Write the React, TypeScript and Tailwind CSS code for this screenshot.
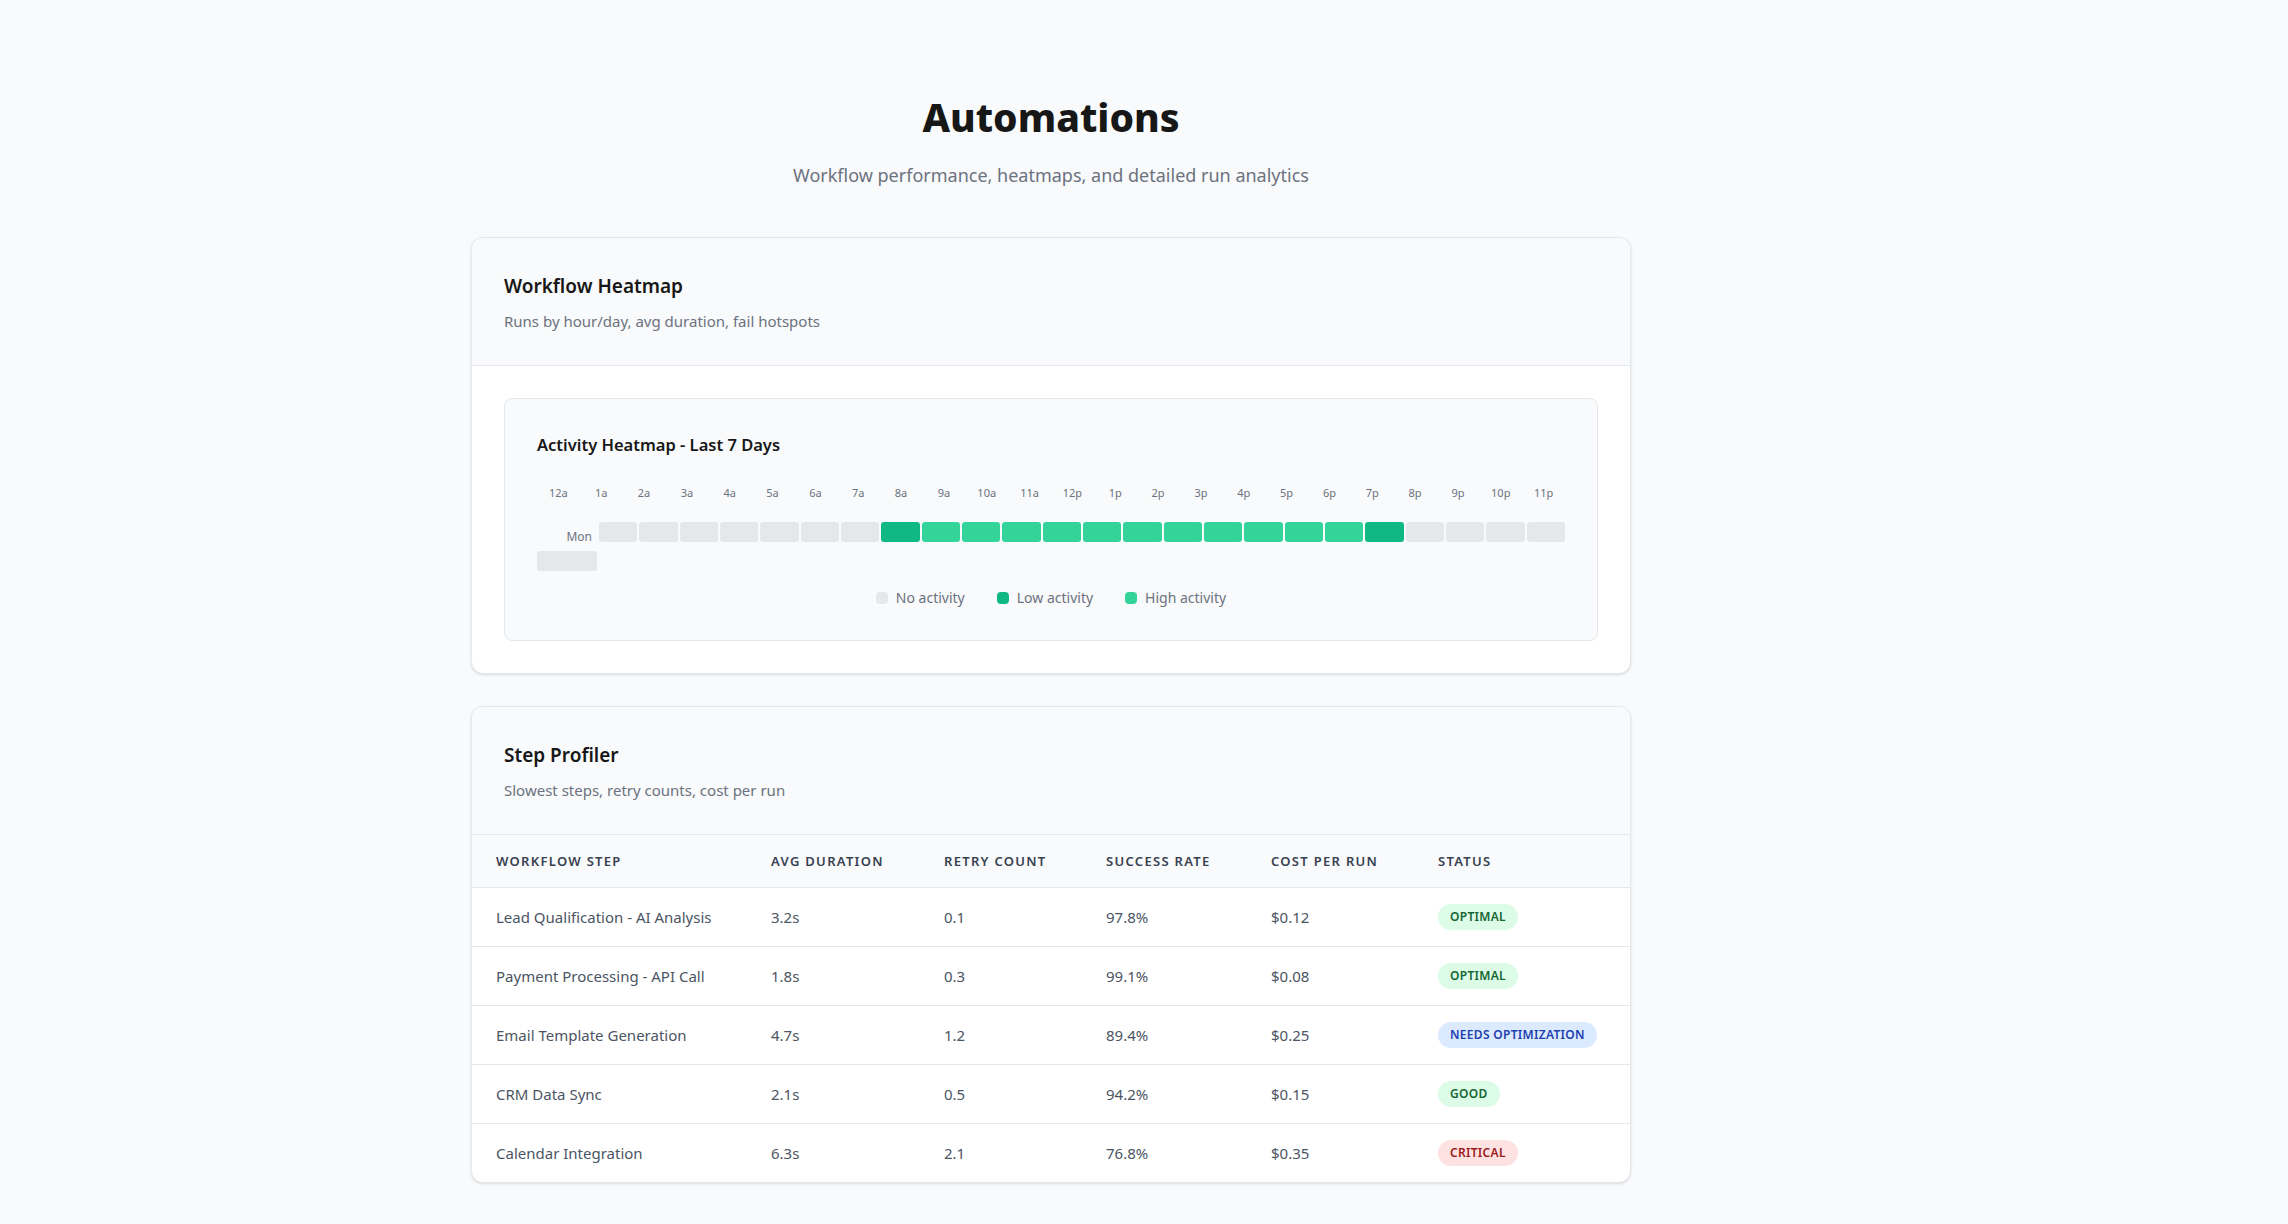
import React from "react";

const hours = [
  "12a", "1a", "2a", "3a", "4a", "5a", "6a", "7a", "8a", "9a", "10a", "11a",
  "12p", "1p", "2p", "3p", "4p", "5p", "6p", "7p", "8p", "9p", "10p", "11p",
];

// 0 = none, 1 = low, 2 = high
const monday = [0, 0, 0, 0, 0, 0, 0, 1, 2, 2, 2, 2, 2, 2, 2, 2, 2, 2, 2, 1, 0, 0, 0, 0];

const cellColor = ["bg-[#e5e7eb]", "bg-[#10b981]", "bg-[#34d399]"];

type Status = "optimal" | "needs" | "good" | "critical";

const steps: {
  name: string;
  duration: string;
  retries: string;
  success: string;
  cost: string;
  status: Status;
}[] = [
  { name: "Lead Qualification - AI Analysis", duration: "3.2s", retries: "0.1", success: "97.8%", cost: "$0.12", status: "optimal" },
  { name: "Payment Processing - API Call", duration: "1.8s", retries: "0.3", success: "99.1%", cost: "$0.08", status: "optimal" },
  { name: "Email Template Generation", duration: "4.7s", retries: "1.2", success: "89.4%", cost: "$0.25", status: "needs" },
  { name: "CRM Data Sync", duration: "2.1s", retries: "0.5", success: "94.2%", cost: "$0.15", status: "good" },
  { name: "Calendar Integration", duration: "6.3s", retries: "2.1", success: "76.8%", cost: "$0.35", status: "critical" },
];

const badge: Record<Status, { label: string; cls: string }> = {
  optimal: { label: "Optimal", cls: "bg-[#dcfce7] text-[#166534]" },
  needs: { label: "Needs Optimization", cls: "bg-[#dbeafe] text-[#1e40af]" },
  good: { label: "Good", cls: "bg-[#dcfce7] text-[#166534]" },
  critical: { label: "Critical", cls: "bg-[#fee2e2] text-[#991b1b]" },
};

function CardHeader({ title, subtitle }: { title: string; subtitle: string }) {
  return (
    <div className="border-b border-[#e5e7eb] bg-[#f9fafb] px-8 pb-[33px] pt-[34px]">
      <h2 className="text-[19px] font-semibold leading-7 text-[#171717]">{title}</h2>
      <p className="mt-[10px] text-[15px] leading-[22px] text-[#6b7280]">{subtitle}</p>
    </div>
  );
}

function Heatmap() {
  return (
    <div className="rounded-lg border border-[#e5e7eb] bg-[#f9fafb] p-8">
      <h3 className="mb-[26px] text-[16.5px] font-semibold leading-7 text-[#171717]">
        Activity Heatmap - Last 7 Days
      </h3>
      <div className="grid grid-cols-[repeat(24,minmax(0,1fr))]">
        {hours.map((h) => (
          <span key={h} className="text-center text-[11px] leading-4 text-[#6b7280]">
            {h}
          </span>
        ))}
      </div>
      <div className="mt-[21px] grid grid-cols-[60px_repeat(24,minmax(0,1fr))] gap-[2px]">
        <span className="pb-1 pr-[5px] pt-[7px] text-right text-xs leading-4 text-[#6b7280]">
          Mon
        </span>
        {monday.map((v, i) => (
          <div key={i} className={`h-5 rounded-[3px] ${cellColor[v]}`} />
        ))}
        <div className="h-5 rounded-[3px] bg-[#e5e7eb]" />
      </div>
      <div className="mt-[17px] flex items-center justify-center gap-8 text-sm leading-5 text-[#6b7280]">
        <span className="flex items-center gap-2">
          <span className="h-3 w-3 rounded-sm bg-[#e5e7eb]" />
          No activity
        </span>
        <span className="flex items-center gap-2">
          <span className="h-3 w-3 rounded-sm bg-[#10b981]" />
          Low activity
        </span>
        <span className="flex items-center gap-2">
          <span className="h-3 w-3 rounded-sm bg-[#34d399]" />
          High activity
        </span>
      </div>
    </div>
  );
}

function StepTable() {
  const th = "px-6 py-4 text-left text-[13px] font-semibold uppercase leading-5 tracking-widest text-[#374151]";
  const td = "px-6 py-4 text-[15px] leading-[26px] text-[#4b5563]";
  return (
    <table className="w-full table-fixed border-collapse">
      <thead className="bg-[#f9fafb]">
        <tr className="border-b border-[#e5e7eb]">
          <th className={`${th} w-[275px]`}>Workflow Step</th>
          <th className={`${th} w-[173px]`}>Avg Duration</th>
          <th className={`${th} w-[162px]`}>Retry Count</th>
          <th className={`${th} w-[165px]`}>Success Rate</th>
          <th className={`${th} w-[167px]`}>Cost per Run</th>
          <th className={th}>Status</th>
        </tr>
      </thead>
      <tbody>
        {steps.map((s, i) => (
          <tr key={s.name} className={i < steps.length - 1 ? "border-b border-[#e5e7eb]" : ""}>
            <td className={td}>{s.name}</td>
            <td className={td}>{s.duration}</td>
            <td className={td}>{s.retries}</td>
            <td className={td}>{s.success}</td>
            <td className={td}>{s.cost}</td>
            <td className="px-6 py-4">
              <div className="flex">
                <span
                  className={`rounded-full px-3 py-[5px] text-xs font-semibold uppercase leading-4 tracking-wide ${badge[s.status].cls}`}
                >
                  {badge[s.status].label}
                </span>
              </div>
            </td>
          </tr>
        ))}
      </tbody>
    </table>
  );
}

export default function App() {
  return (
    <div
      className="min-h-screen bg-[#f9fafb] pb-10 pr-[186px] pt-[94px]"
      style={{ fontFamily: '"Noto Sans", "Open Sans", sans-serif' }}
    >
      <div className="mx-auto w-[1160px]">
        <header className="mb-12 text-center">
          <h1 className="text-[39px] font-extrabold leading-[46px] text-[#171717]">Automations</h1>
          <p className="mt-[21px] text-lg leading-7 text-[#6b7280]">
            Workflow performance, heatmaps, and detailed run analytics
          </p>
        </header>

        <section className="overflow-hidden rounded-xl border border-[#e5e7eb] bg-white shadow-sm">
          <CardHeader title="Workflow Heatmap" subtitle="Runs by hour/day, avg duration, fail hotspots" />
          <div className="p-8">
            <Heatmap />
          </div>
        </section>

        <section className="mt-8 overflow-hidden rounded-xl border border-[#e5e7eb] bg-white shadow-sm">
          <CardHeader title="Step Profiler" subtitle="Slowest steps, retry counts, cost per run" />
          <StepTable />
        </section>
      </div>
    </div>
  );
}
